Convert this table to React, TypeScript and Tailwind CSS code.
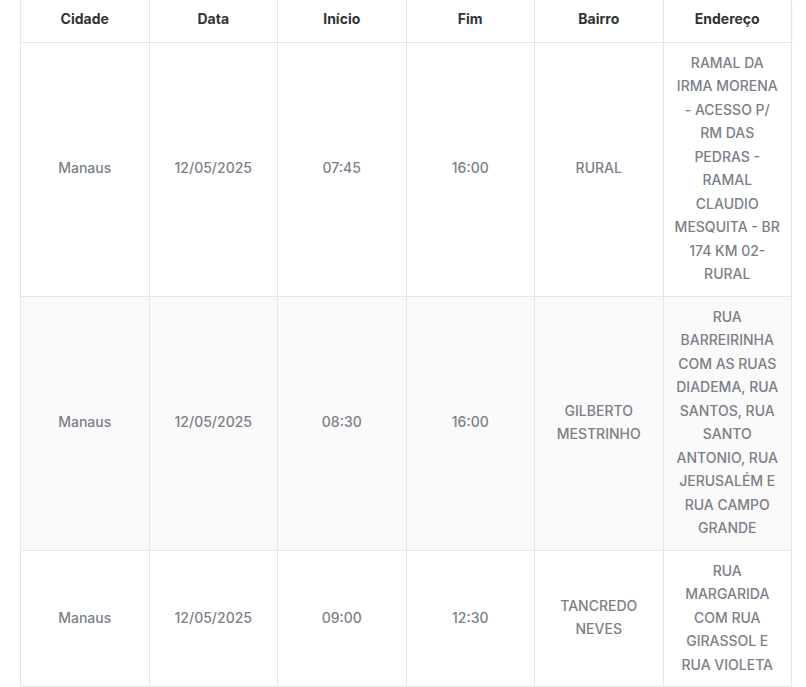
export default function App() {
  const rows = [
    {
      cidade: "Manaus",
      data: "12/05/2025",
      inicio: "07:45",
      fim: "16:00",
      bairro: "RURAL",
      endereco: "RAMAL DA IRMA MORENA - ACESSO P/ RM DAS PEDRAS - RAMAL CLAUDIO MESQUITA - BR 174 KM 02- RURAL",
    },
    {
      cidade: "Manaus",
      data: "12/05/2025",
      inicio: "08:30",
      fim: "16:00",
      bairro: "GILBERTO MESTRINHO",
      endereco: "RUA BARREIRINHA COM AS RUAS DIADEMA, RUA SANTOS, RUA SANTO ANTONIO, RUA JERUSALÉM E RUA CAMPO GRANDE",
    },
    {
      cidade: "Manaus",
      data: "12/05/2025",
      inicio: "09:00",
      fim: "12:30",
      bairro: "TANCREDO NEVES",
      endereco: "RUA MARGARIDA COM RUA GIRASSOL E RUA VIOLETA",
    },
  ];
  const heads = ["Cidade", "Data", "Início", "Fim", "Bairro", "Endereço"];

  return (
    <div className="bg-white h-[687px] overflow-hidden font-['Inter',sans-serif]">
      <table className="ml-[20px] w-[772px] table-fixed border-collapse text-center">
        <thead className="shadow-[0_2px_3px_rgba(0,0,0,0.05)]">
          <tr>
            {heads.map((h) => (
              <th
                key={h}
                className="h-[42px] border-x border-b border-[#e6e6e6] px-3 pb-[5px] text-[14px] font-bold text-[#333]"
              >
                {h}
              </th>
            ))}
          </tr>
        </thead>
        <tbody>
          {rows.map((r, i) => (
            <tr key={i} className={i % 2 === 1 ? "bg-[#fafafa]" : "bg-white"}>
              {[r.cidade, r.data, r.inicio, r.fim, r.bairro, r.endereco].map((c, j) => (
                <td
                  key={j}
                  className="border border-[#e6e6e6] px-[10px] pt-[8px] pb-[10px] align-middle text-[14px] font-medium leading-[23.5px] text-[#7b7f88]"
                >
                  {c}
                </td>
              ))}
            </tr>
          ))}
        </tbody>
      </table>
    </div>
  );
}
